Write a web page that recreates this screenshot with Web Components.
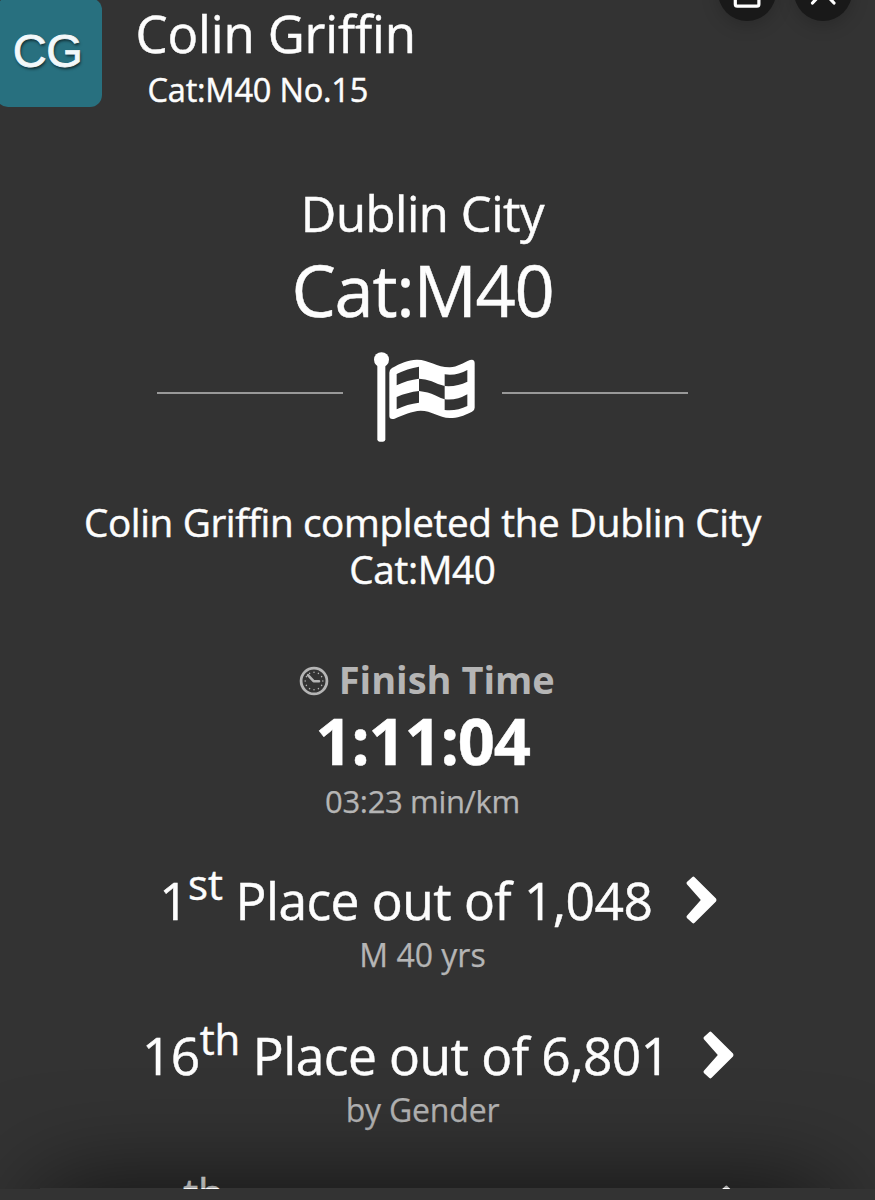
<!DOCTYPE html>
<html lang="en">
<head>
<meta charset="utf-8">
<title>Colin Griffin - Dublin City</title>
<style>
  html, body {
    margin: 0;
    height: 100%;
    overflow: hidden;
    background: #333;
  }
  body {
    font-family: "Open Sans", "Noto Sans", sans-serif;
    color: #fdfdfd;
    -webkit-text-stroke: .45px;
  }
</style>
</head>
<body>

<result-sheet>
  <round-button slot="actions" icon="share"></round-button>
  <round-button slot="actions" icon="close"></round-button>

  <runner-header initials="CG">
    Colin Griffin
    <span slot="info">Cat:M40 No.15</span>
  </runner-header>

  <race-title>
    Dublin City
    <span slot="category">Cat:M40</span>
  </race-title>
  <flag-divider></flag-divider>
  <race-summary>Colin Griffin completed the Dublin City Cat:M40</race-summary>

  <finish-time time="1:11:04" pace="03:23 min/km">Finish Time</finish-time>

  <place-row rank="1" suffix="st" text="Place out of 1,048">M 40 yrs</place-row>
  <place-row rank="16" suffix="th" text="Place out of 6,801" style="--sub-spacing: -.2px; --spacing: -.55px">by Gender</place-row>
  <place-row class="next" suffix="th"></place-row>
</result-sheet>

<script>
function attach(el, html) {
  const root = el.attachShadow({ mode: 'open' });
  root.innerHTML = html;
  return root;
}

class ResultSheet extends HTMLElement {
  constructor() {
    super();
    attach(this, `
      <style>
        :host {
          display: flex;
          flex-direction: column;
          height: 1200px;
          background: #333;
        }
        #scroll {
          position: relative;
          height: 1189px;
          overflow: hidden;
        }
        #content {
          width: 845px;
          text-align: center;
        }
        #actions {
          position: absolute;
          top: -37px;
          right: 23px;
          display: flex;
          gap: 18px;
        }
        /* shade thrown by the bottom bar over the scrolled content */
        #shade {
          position: absolute;
          top: calc(100% - 1px);
          left: 40px;
          right: 45px;
          height: 120px;
          box-shadow: 0 0 100px rgba(0, 0, 0, .68);
        }
        #bar {
          flex: 1;
          background: #333;
        }
        ::slotted(.next) {
          --text-width: 502px;
          --text-indent: 57px;
        }
      </style>
      <div id="scroll">
        <div id="content"><slot></slot></div>
        <div id="actions"><slot name="actions"></slot></div>
        <div id="shade"></div>
      </div>
      <div id="bar"></div>
    `);
  }
}

class RoundButton extends HTMLElement {
  constructor() {
    super();
    const icons = {
      share: '<path d="M17.3 20v13.2a2 2 0 0 0 2 2h19.6a2 2 0 0 0 2-2V20"/>',
      close: '<path d="M18.5 32.5 40 9.5M40 32.5 18.5 9.5" transform="translate(0 -.5)"/>'
    };
    attach(this, `
      <style>
        :host {
          display: block;
          width: 58px;
          height: 58px;
          border-radius: 50%;
          background: #191919;
          box-shadow: 0 4px 18px rgba(0, 0, 0, .2);
        }
        svg {
          display: block;
          fill: none;
          stroke: #fff;
          stroke-width: 3.2;
          stroke-linecap: round;
        }
      </style>
      <svg width="58" height="58" viewBox="0 -8 58 58">${icons[this.getAttribute('icon')]}</svg>
    `);
  }
}

class RunnerHeader extends HTMLElement {
  constructor() {
    super();
    attach(this, `
      <style>
        :host {
          display: flex;
          height: 183px;
          text-align: left;
        }
        #avatar {
          display: flex;
          align-items: center;
          justify-content: center;
          box-sizing: border-box;
          width: 106px;
          height: 108.5px;
          margin: -2px 33.5px 0 -4px;
          padding: 0 3px 4px 0;
          border-radius: 12px;
          background: #28707f;
          font: 47px "Liberation Sans", sans-serif;
          letter-spacing: -.5px;
          color: #f3f8fa;
          -webkit-text-stroke: .8px;
          text-shadow: 1px 2px 3px rgba(0, 0, 0, .65);
        }
        #name {
          padding-top: 3px;
          font-size: 51px;
          line-height: 60px;
          letter-spacing: -.15px;
        }
        #info {
          padding: 7px 0 0 12px;
          font-size: 32.5px;
          line-height: 40px;
          letter-spacing: -.2px;
        }
      </style>
      <div id="avatar">${this.getAttribute('initials')}</div>
      <div>
        <div id="name"><slot></slot></div>
        <div id="info"><slot name="info"></slot></div>
      </div>
    `);
  }
}

class RaceTitle extends HTMLElement {
  constructor() {
    super();
    attach(this, `
      <style>
        :host {
          display: block;
        }
        #race {
          font-size: 49px;
          line-height: 60px;
          letter-spacing: -.45px;
        }
        #category {
          margin-top: 5px;
          font-size: 70.5px;
          line-height: 84px;
          letter-spacing: -1.3px;
        }
      </style>
      <div id="race"><slot></slot></div>
      <div id="category"><slot name="category"></slot></div>
    `);
  }
}

class FlagDivider extends HTMLElement {
  constructor() {
    super();
    attach(this, `
      <style>
        :host {
          display: flex;
          align-items: center;
          justify-content: center;
          height: 92px;
          margin-top: 18px;
        }
        i {
          width: 186px;
          height: 2px;
          margin-top: -6px;
          background: #999;
        }
      </style>
      <i></i>
      <svg width="159" height="92" viewBox="-21 30 477 276" fill="#fff">
        <circle cx="94.5" cy="59" r="22.5"/>
        <rect x="82" y="66" width="24" height="239" rx="7"/>
        <path fill-rule="evenodd" d="M118 98Q118 89 126 84C150 70 175 60 200 59C235 58 262 83 300 82C322 81 340 68 360 60Q374 56 374 70V203Q374 211 366 215C340 228 322 234 300 234C265 233 245 212 212 212C185 213 160 225 134 236Q118 240 118 228Z
          M140 102V136Q172 120 207 116V80Q172 86 140 102Z
          M207 116V153Q235 156 255 166Q270 174 284 178V138Q262 133 245 124Q225 117 207 116Z
          M284 103V138Q320 141 352 125V90Q320 108 284 103Z
          M140 171V208Q172 192 207 188V153Q172 157 140 171Z
          M284 178V210Q320 214 352 198V163Q320 182 284 178Z"/>
      </svg>
      <i></i>
    `);
  }
}

class RaceSummary extends HTMLElement {
  constructor() {
    super();
    attach(this, `
      <style>
        :host {
          display: block;
          padding: 57px 60px 0;
          font-size: 38.7px;
          line-height: 47.3px;
          letter-spacing: -.37px;
        }
      </style>
      <slot></slot>
    `);
  }
}

class FinishTime extends HTMLElement {
  constructor() {
    super();
    let dots = '';
    for (let a = 0; a < 360; a += 30) {
      dots += `<circle cx="15" cy="6.2" r=".75" transform="rotate(${a} 15 15)"/>`;
    }
    attach(this, `
      <style>
        :host {
          display: block;
          padding-top: 61px;
          color: #b5b5b5;
        }
        #label {
          display: flex;
          align-items: center;
          justify-content: center;
          gap: 9.5px;
          padding-left: 9px;
          font-weight: bold;
          font-size: 38px;
          line-height: 48px;
          -webkit-text-stroke: 0;
        }
        svg {
          margin-top: 5px;
        }
        #time {
          margin-top: -1px;
          font-weight: bold;
          font-size: 65px;
          line-height: 76px;
          letter-spacing: -1.2px;
          color: #fff;
        }
        #pace {
          margin-top: 3px;
          font-size: 31px;
          line-height: 40px;
          letter-spacing: -.35px;
          -webkit-text-stroke: .25px;
        }
      </style>
      <div id="label">
        <svg width="30" height="30" viewBox="0 0 30 30" fill="#b5b5b5">
          <circle cx="15" cy="15" r="12.9" fill="none" stroke="#b5b5b5" stroke-width="2.8"/>
          ${dots}
          <path d="M9 9.2 14.6 15.2H20" fill="none" stroke="#b5b5b5" stroke-width="2.6" stroke-linecap="round" stroke-linejoin="round"/>
        </svg>
        <slot></slot>
      </div>
      <div id="time">${this.getAttribute('time')}</div>
      <div id="pace">${this.getAttribute('pace')}</div>
    `);
  }
}

class PlaceRow extends HTMLElement {
  constructor() {
    super();
    const rank = this.getAttribute('rank') || '';
    const text = this.getAttribute('text') || '';
    attach(this, `
      <style>
        :host {
          display: block;
          padding-top: 44.5px;
        }
        #row {
          display: flex;
          align-items: center;
          justify-content: center;
          gap: 33.5px;
          height: 70px;
          padding-left: 31px;
          font-size: 51.5px;
          line-height: 70px;
          letter-spacing: var(--spacing, -.55px);
          white-space: nowrap;
        }
        #text {
          width: var(--text-width, auto);
          padding-left: var(--text-indent, 0);
          text-align: left;
        }
        sup {
          font-size: 42px;
          line-height: 0;
          vertical-align: 20px;
          letter-spacing: -.2px;
        }
        #group {
          height: 40px;
          font-size: 32px;
          line-height: 40px;
          letter-spacing: var(--sub-spacing, 0);
          color: #b5b5b5;
          -webkit-text-stroke: .25px;
        }
      </style>
      <div id="row">
        <div id="text">${rank}<sup>${this.getAttribute('suffix')}</sup> ${text}</div>
        <svg width="31" height="48" viewBox="0 0 31 48" fill="#fff">
          <path d="M6.4.9Q7.6.1 8.6 1.3L30 22.6Q31 24 30 25.4L8.6 46.7Q7.6 47.9 6.4 47.1L.9 41.9Q0 40.9.9 39.8L14.8 24 .9 8.2Q0 7.1.9 6.1Z"/>
        </svg>
      </div>
      <div id="group"><slot></slot></div>
    `);
  }
}

customElements.define('result-sheet', ResultSheet);
customElements.define('round-button', RoundButton);
customElements.define('runner-header', RunnerHeader);
customElements.define('race-title', RaceTitle);
customElements.define('flag-divider', FlagDivider);
customElements.define('race-summary', RaceSummary);
customElements.define('finish-time', FinishTime);
customElements.define('place-row', PlaceRow);
</script>
</body>
</html>
